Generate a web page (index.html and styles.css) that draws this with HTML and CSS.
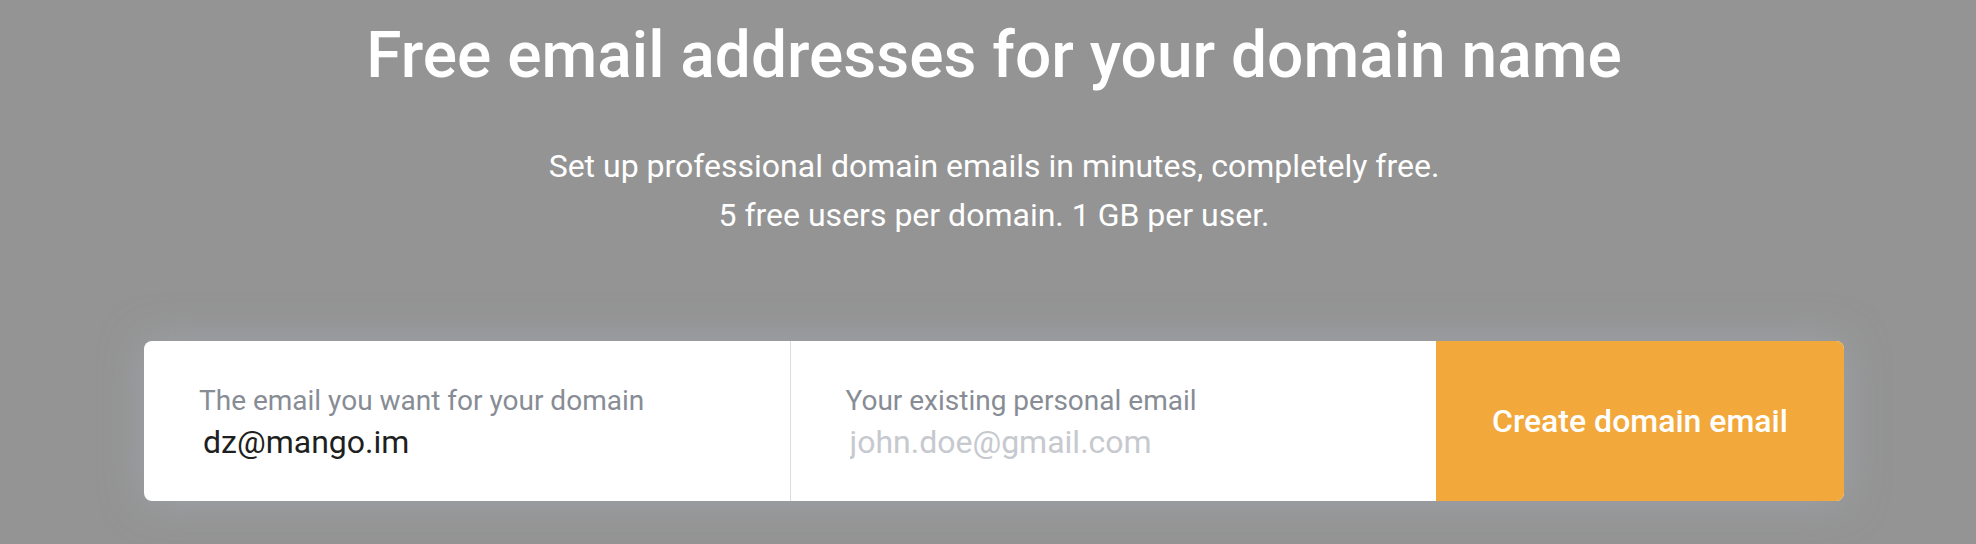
FILE: index.html
```html
<!DOCTYPE html>
<html lang="en">
<head>
<meta charset="utf-8">
<title>Free email addresses for your domain name</title>
<link rel="stylesheet" href="styles.css">
</head>
<body>
<section class="hero">
  <h1 class="hero-title">Free email addresses for your domain name</h1>
  <p class="hero-sub">Set up professional domain emails in minutes, completely free.<br>5 free users per domain. 1 GB per user.</p>
  <form class="signup">
    <label class="field">
      <span class="field-label">The email you want for your domain</span>
      <input class="field-input" type="text" value="dz@mango.im">
    </label>
    <label class="field field-second">
      <span class="field-label">Your existing personal email</span>
      <input class="field-input" type="text" placeholder="john.doe@gmail.com">
    </label>
    <button class="signup-btn" type="button">Create domain email</button>
  </form>
</section>
</body>
</html>
```
FILE: styles.css
```css
html, body {
  margin: 0;
  padding: 0;
}
body {
  background: #949494;
  font-family: Roboto, "Liberation Sans", sans-serif;
  width: 1976px;
  height: 544px;
  overflow: hidden;
}
.hero {
  padding: 20px 132px 0 144px;
  display: flex;
  flex-direction: column;
  align-items: center;
}
.hero-title {
  margin: 0;
  font-size: 64px;
  font-weight: 500;
  line-height: 72px;
  color: #ffffff;
  white-space: nowrap;
}
.hero-sub {
  margin: 50px 0 0;
  font-size: 32px;
  font-weight: 400;
  line-height: 49px;
  color: #ffffff;
  text-align: center;
}
.signup {
  margin-top: 101px;
  align-self: stretch;
  display: flex;
  height: 160px;
  border-radius: 8px;
  background: #ffffff;
  box-shadow: 0 0 40px rgba(170, 175, 185, 0.55);
  overflow: hidden;
}
.field {
  flex: 1 1 0;
  display: flex;
  flex-direction: column;
  justify-content: center;
  padding: 4px 0 0 55px;
  gap: 4px;
}
.field-second {
  border-left: 1px solid #dcdde1;
}
.field-label {
  font-size: 28px;
  line-height: 34px;
  color: #878c95;
}
.field-input {
  border: 0;
  outline: 0;
  padding: 0 4px;
  margin: 0;
  font-family: inherit;
  font-size: 32px;
  line-height: 40px;
  height: 40px;
  color: #1e1f21;
  background: transparent;
  width: 500px;
}
.field-input::placeholder {
  color: #c6c9ce;
}
.signup-btn {
  flex: 0 0 408px;
  border: 0;
  margin: 0;
  background: #f2a83b;
  color: #ffffff;
  font-family: inherit;
  font-size: 32px;
  font-weight: 500;
  cursor: pointer;
}
```
